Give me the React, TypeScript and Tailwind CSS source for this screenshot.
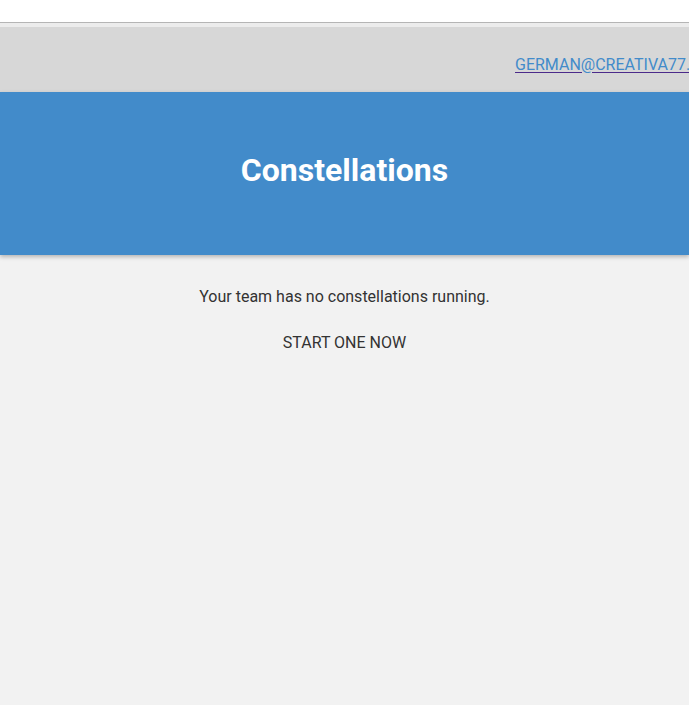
import React from "react";

export default function App() {
  return (
    <div className="min-h-[705px] w-[689px] overflow-hidden bg-[#f2f2f2] font-['Roboto',sans-serif]">
      <div className="h-[22px] bg-white" />
      <div className="h-px bg-[#b5b5b5]" />
      <div className="h-[4px] bg-[#ececec]" />
      <div className="flex h-[65px] items-center bg-[#d7d7d7] pl-[515px] pt-[10px]">
        <a
          href="#"
          className="whitespace-nowrap text-[16px] uppercase text-[#428bca] underline decoration-[#4b2a8a] underline-offset-[2px]"
        >
          german@creativa77.com
        </a>
      </div>
      <div className="relative z-10 flex h-[163px] items-center justify-center bg-[#428bca] pb-[8px] shadow-[0_2px_4px_rgba(0,0,0,0.25)]">
        <h1 className="text-[32px] font-bold text-white">Constellations</h1>
      </div>
      <div className="flex flex-col items-center pt-[32px] text-[16px] text-[#333333]">
        <p className="leading-[20px]">Your team has no constellations running.</p>
        <a href="#" className="mt-[26px] leading-[20px] text-[#333333]">
          START ONE NOW
        </a>
      </div>
    </div>
  );
}
